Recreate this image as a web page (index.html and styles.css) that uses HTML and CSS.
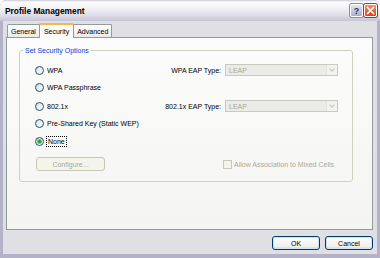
FILE: index.html
```html
<!DOCTYPE html>
<html lang="en">
  <head>
    <meta charset="UTF-8" />
    <title>Profile Management</title>
    <link rel="stylesheet" href="styles.css">
  </head>
  <body>
    <div class="window">
      <div class="titlebar">
        <span class="title">Profile Management</span>
        <div class="caption-buttons">
          <span class="cap help">?</span>
          <span class="cap close">
            <svg width="9" height="9" viewBox="0 0 9 9">
              <path d="M1.5 1.5 L7.5 7.5 M7.5 1.5 L1.5 7.5" stroke="#fff" stroke-width="1.6" stroke-linecap="square" />
            </svg>
          </span>
        </div>
      </div>

      <div class="client">
        <div class="tabs">
          <div class="tab">General</div>
          <div class="tab active">Security</div>
          <div class="tab">Advanced</div>
        </div>

        <div class="panel">
          <fieldset class="group">
            <legend>Set Security Options</legend>
            <div class="options">
              <label class="radio"><span class="dot"></span>WPA</label>
              <span class="eap-label">WPA EAP Type:</span>
              <div class="select"><span>LEAP</span><span class="arrow"></span></div>

              <label class="radio"><span class="dot"></span>WPA Passphrase</label>
              <span></span>
              <span></span>

              <label class="radio"><span class="dot"></span>802.1x</label>
              <span class="eap-label">802.1x EAP Type:</span>
              <div class="select"><span>LEAP</span><span class="arrow"></span></div>

              <label class="radio"><span class="dot"></span>Pre-Shared Key (Static WEP)</label>
              <span></span>
              <span></span>

              <label class="radio"><span class="dot checked"></span><span class="focus">None</span></label>
              <span></span>
              <span></span>

              <div class="btn disabled configure">Configure...</div>
              <span></span>
              <label class="check"><span class="box"></span>Allow Association to Mixed Cells</label>
            </div>
          </fieldset>
        </div>

        <div class="footer">
          <div class="btn">OK</div>
          <div class="btn">Cancel</div>
        </div>
      </div>
    </div>
  </body>
</html>
```

FILE: styles.css
```css
* {
  margin: 0;
  padding: 0;
  box-sizing: border-box;
}

body {
  width: 380px;
  height: 258px;
  background-color: #ffffff;
  font-family: "Liberation Sans", Arial, sans-serif;
  font-size: 7px;
  color: #000000;
  overflow: hidden;
}

.window {
  width: 380px;
  height: 258px;
  display: flex;
  flex-direction: column;
  background-color: #b3b2c8;
  border-radius: 6px 6px 0 0;
  overflow: hidden;
}

.titlebar {
  height: 21px;
  display: flex;
  align-items: center;
  justify-content: space-between;
  padding: 0 3px 0 5px;
  background: linear-gradient(to bottom, #c8c8d8 0px, #fdfdfe 2px, #f2f2f6 8px, #dcdbe6 16px, #c6c5d6 21px);
}

.title {
  font-weight: bold;
  font-size: 8.4px;
  color: #000000;
  padding-top: 1px;
}

.caption-buttons {
  display: flex;
  gap: 1px;
}

.cap {
  width: 13px;
  height: 13px;
  display: flex;
  align-items: center;
  justify-content: center;
  border: 1px solid #ffffff;
  border-radius: 2px;
  font-weight: bold;
  font-size: 9px;
}

.help {
  background: linear-gradient(to bottom, #e6e8f2, #a9acc8);
  color: #303458;
  box-shadow: 0 0 0 1px #8a8ca8;
}

.close {
  background: linear-gradient(to bottom, #f28d6e, #d8401c);
  box-shadow: 0 0 0 1px #a8341c;
}

.client {
  flex: 1;
  margin: 0 3px 4px 3px;
  padding: 2px 4px 0 3px;
  background-color: #e0dfe3;
  display: flex;
  flex-direction: column;
}

.tabs {
  height: 14px;
  display: flex;
  align-items: flex-end;
  padding-left: 1px;
}

.tab {
  height: 13px;
  padding: 0 3px;
  display: flex;
  align-items: center;
  border: 1px solid #919b9c;
  border-bottom: none;
  border-radius: 2px 2px 0 0;
  background: linear-gradient(to bottom, #ffffff, #ecebe6);
  margin-right: -1px;
}

.tab.active {
  height: 15px;
  padding: 0 4px;
  margin-bottom: -1px;
  position: relative;
  z-index: 1;
  background: #fcfcfb;
  border-top: 2px solid #f5b847;
}

.panel {
  height: 193px;
  border: 1px solid #919b9c;
  background: linear-gradient(to bottom, #fcfcfc, #f4f4f1);
  padding: 0 19px 0 12px;
}

.group {
  margin-top: 8px;
  height: 136px;
  border: 1px solid #d0d0bf;
  border-radius: 3px;
  padding: 0 14px 0 15px;
}

.group legend {
  margin-left: -12px;
  padding: 0 2px;
  color: #0046d5;
  line-height: 9px;
}

.options {
  margin-top: 7px;
  display: grid;
  grid-template-columns: 1fr auto 113px;
  grid-template-rows: 17px 19px 17px 18px 24px 14px;
  column-gap: 4px;
  align-items: start;
}

.radio,
.check,
.eap-label {
  height: 16px;
  display: flex;
  align-items: center;
  white-space: nowrap;
}

.eap-label {
  justify-content: flex-end;
}

.dot {
  width: 9px;
  height: 9px;
  margin-right: 3px;
  border: 1px solid #1c5180;
  border-radius: 50%;
  background: linear-gradient(135deg, #dcdcd6, #ffffff);
  display: flex;
  align-items: center;
  justify-content: center;
}

.dot.checked::after {
  content: "";
  width: 3px;
  height: 3px;
  border-radius: 50%;
  background-color: #21a121;
  box-shadow: 0 0 0 1px #5ccc5c;
}

.focus {
  outline: 1px dotted #000000;
  padding: 0 1px;
  line-height: 9px;
}

.select {
  margin-top: 2px;
  height: 12px;
  display: flex;
  align-items: center;
  justify-content: space-between;
  border: 1px solid #c9c9c0;
  background-color: #ebebe8;
  color: #aca899;
  padding-left: 3px;
}

.arrow {
  width: 11px;
  height: 10px;
  background-color: #f2f2ee;
  border-left: 1px solid #e3e3dc;
  position: relative;
}

.arrow::after {
  content: "";
  position: absolute;
  left: 3px;
  top: 2px;
  width: 3px;
  height: 3px;
  border-right: 1px solid #c4c4bc;
  border-bottom: 1px solid #c4c4bc;
  transform: rotate(45deg);
}

.btn {
  height: 14px;
  display: flex;
  align-items: center;
  justify-content: center;
  border: 1px solid #003c74;
  border-radius: 3px;
  background: linear-gradient(to bottom, #ffffff, #f0efea 80%, #d6d0c5);
  box-shadow: inset 0 0 0 1px #cde0f6;
}

.btn.disabled {
  border-color: #c9c7ba;
  background: #f5f4ea;
  color: #aca899;
  box-shadow: none;
}

.configure {
  width: 69px;
  margin-left: 1px;
}

.check {
  margin-left: -2px;
  height: 14px;
  color: #aca899;
}

.box {
  width: 9px;
  height: 9px;
  margin-right: 2px;
  border: 1px solid #cac8bb;
  background-color: #f5f4ea;
}

.footer {
  height: 24px;
  display: flex;
  justify-content: flex-end;
  align-items: flex-start;
  gap: 5px;
  padding-top: 6px;
}

.footer .btn {
  width: 48px;
}
```
